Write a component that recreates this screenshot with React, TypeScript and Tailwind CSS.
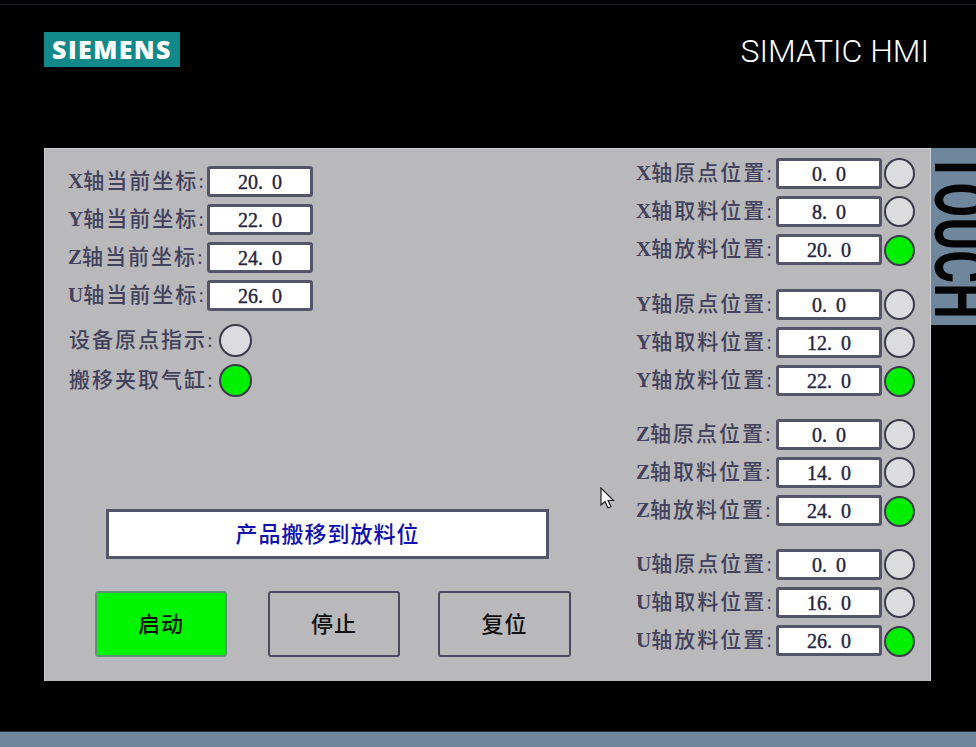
const cjk = "font-['Liberation_Serif','Noto_Sans_CJK_SC',serif]"

const groups = [
  { axis: 'X', values: ['0.0', '8.0', '20.0'] },
  { axis: 'Y', values: ['0.0', '12.0', '22.0'] },
  { axis: 'Z', values: ['0.0', '14.0', '24.0'] },
  { axis: 'U', values: ['0.0', '16.0', '26.0'] },
]
const positions = ['原点', '取料', '放料']
const current = [
  { axis: 'X', value: '20.0' },
  { axis: 'Y', value: '22.0' },
  { axis: 'Z', value: '24.0' },
  { axis: 'U', value: '26.0' },
]

function ValueBox({ value }: { value: string }) {
  const [whole, frac] = value.split('.')
  return (
    <div className="flex h-[31px] w-[106px] items-center justify-center rounded-[3px] border-[3px] border-[#55556a] bg-white font-['Liberation_Serif',serif] text-[20px] text-[#24243f] [-webkit-text-stroke:0.4px_#24243f]">
      {whole}.<span className="ml-[9px]">{frac}</span>
    </div>
  )
}

function Lamp({ on, size }: { on: boolean; size: string }) {
  return <div className={`${size} shrink-0 rounded-full border-2 border-[#3a3a4a] ${on ? 'bg-[#00f000]' : 'bg-[#dcdbdd]'}`} />
}

function Label({ axis, text, width }: { axis?: string; text: string; width: string }) {
  return (
    <div className={`${width} ${cjk} whitespace-nowrap text-[21px] font-medium leading-none tracking-[2px] text-[#42425c]`}>
      {axis && <span className="font-bold tracking-[0px]">{axis}</span>}
      {text}
    </div>
  )
}

function PanelButton({ text, active, className }: { text: string; active?: boolean; className: string }) {
  return (
    <button className={`flex h-[66px] items-center justify-center rounded-[3px] border-2 ${className} ${cjk} text-[22px] font-medium tracking-[1px] text-[#111] ${active ? 'border-[#5f8f78] bg-[#00f600]' : 'border-[#4c4c5e] bg-[#b9b8ba]'}`}>
      {text}
    </button>
  )
}

export default function App() {
  return (
    <div className="relative flex h-[747px] w-[976px] flex-col overflow-hidden bg-black">
      {/* top edge */}
      <div className="mt-[4px] h-px bg-[#1c1f24]" />

      {/* header */}
      <div className="flex h-[143px] items-start justify-between pl-[44px] pr-[47px] pt-[27px]">
        <div className="flex h-[35px] w-[136px] items-center justify-center bg-[#11898a] font-['Open_Sans',sans-serif] text-[25px] font-extrabold leading-none tracking-[1.4px] text-white">
          SIEMENS
        </div>
        <div className="mt-[1px] font-['Roboto',sans-serif] text-[32px] font-light leading-[36px] text-white">SIMATIC HMI</div>
      </div>

      <div className="flex items-start pl-[44px]">
        {/* panel */}
        <div className="flex h-[533px] w-[887px] justify-between border-x border-t border-[#d0ced2] bg-[#b9b8ba] pr-[15px]">
          {/* left side */}
          <div className="flex w-[527px] flex-col pb-[24px] pt-[17px]">
            <div className="flex flex-col gap-[7px] pl-[23px]">
              {current.map(row => (
                <div key={row.axis} className="flex items-center">
                  <Label axis={row.axis} text="轴当前坐标:" width="w-[139px]" />
                  <ValueBox value={row.value} />
                </div>
              ))}
            </div>
            <div className="mt-[13px] flex flex-col gap-[7px] pl-[24px]">
              <div className="flex items-center">
                <Label text="设备原点指示:" width="w-[150px] tracking-[2.5px]" />
                <Lamp on={false} size="h-[33px] w-[33px]" />
              </div>
              <div className="flex items-center">
                <Label text="搬移夹取气缸:" width="w-[150px] tracking-[2.5px]" />
                <Lamp on size="h-[33px] w-[33px]" />
              </div>
            </div>
            <div className={`ml-[61px] mt-auto flex h-[50px] w-[443px] items-center justify-center border-[3px] border-[#55556a] bg-white ${cjk} text-[22px] font-medium tracking-[1px] text-[#1010b0]`}>
              产品搬移到放料位
            </div>
            <div className="ml-[50px] mt-[32px] flex">
              <PanelButton text="启动" active className="w-[132px]" />
              <PanelButton text="停止" className="ml-[41px] w-[132px]" />
              <PanelButton text="复位" className="ml-[38px] w-[133px]" />
            </div>
          </div>

          {/* right side */}
          <div className="flex flex-col gap-[23px] pt-[9px]">
            {groups.map(group => (
              <div key={group.axis} className={`flex flex-col gap-[7px] ${group.axis === 'X' ? 'mb-px' : ''}`}>
                {group.values.map((value, i) => (
                  <div key={i} className="flex items-center">
                    <Label axis={group.axis} text={`轴${positions[i]}位置:`} width="w-[140px]" />
                    <ValueBox value={value} />
                    <div className={`ml-[2px] ${i === 2 ? 'translate-y-[1px]' : ''}`}>
                      <Lamp on={i === 2} size="h-[31px] w-[31px]" />
                    </div>
                  </div>
                ))}
              </div>
            ))}
          </div>
        </div>

        {/* TOUCH strip */}
        <div className="relative h-[177px] w-[45px] overflow-hidden bg-[#6f879c]">
          <div className="absolute left-[-8px] top-[4px] origin-top-left scale-y-[0.68] font-['Roboto',sans-serif] text-[74px] font-bold leading-none text-[#050505] [writing-mode:vertical-rl]">
            TOUCH
          </div>
        </div>
      </div>

      {/* bottom bar */}
      <div className="mt-auto h-[16px] border-t border-[#2a3440] bg-[#6f879c]" />

      {/* mouse pointer */}
      <svg className="absolute left-[600px] top-[487px]" width="15" height="23" viewBox="0 0 15 23">
        <path d="M1 1 L1 18 L5 14.5 L8 21 L11 19.5 L8 13.5 L13.5 13.5 Z" fill="#fff" stroke="#222" strokeWidth="1.2" />
      </svg>
    </div>
  )
}
